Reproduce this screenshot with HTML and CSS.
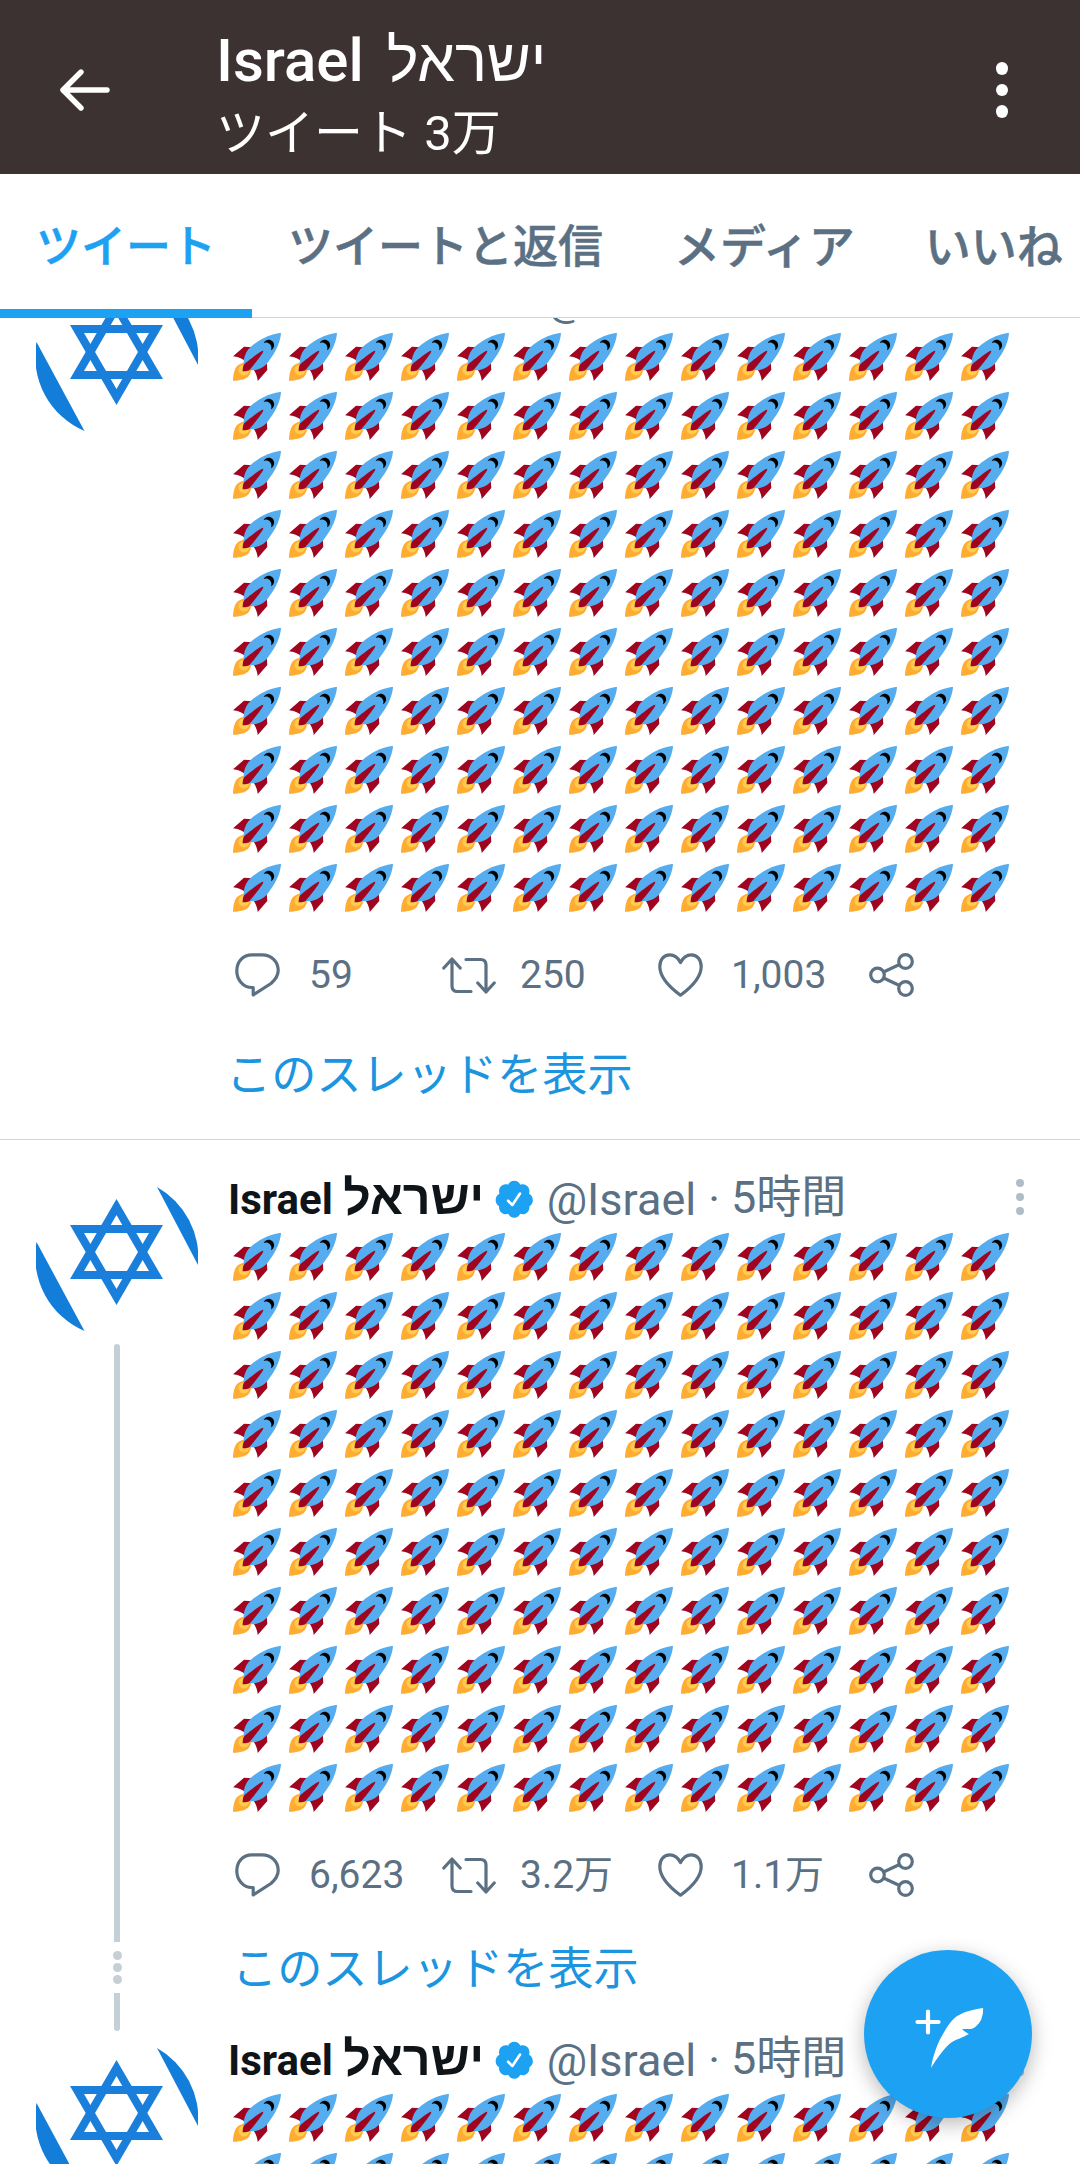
FILE: index.html
```html
<!DOCTYPE html>
<html lang="ja">
<head>
<meta charset="utf-8">
<title>Israel ישראל</title>
<link rel="stylesheet" href="styles.css">
</head>
<body>
<svg class="defs" width="0" height="0" aria-hidden="true">
  <defs>
    <pattern id="rocket-tile" patternUnits="userSpaceOnUse" width="56" height="59">
      <g transform="translate(-1.33 0) scale(1.37)">
        <path fill="#A0041E" d="M1 17l8-7 16 1 1 16-7 8s.001-5.999-6-12-12-6-12-6z"/>
        <path fill="#FFAC33" d="M.973 35s-.036-7.979 2.985-11S15 21.187 15 21.187 14.999 29 11.999 32c-3 3-11.026 3-11.026 3z"/>
        <circle fill="#FFCC4D" cx="8.999" cy="27" r="4"/>
        <path fill="#55ACEE" d="M35.999 0s-10 0-22 10c-6 5-6 14-4 16s11 2 16-4c10-12 10-22 10-22z"/>
        <path d="M26.999 5c-1.623 0-3.013.97-3.641 2.36.502-.227 1.055-.36 1.641-.36 2.209 0 4 1.791 4 4 0 .586-.133 1.139-.359 1.64 1.389-.627 2.359-2.017 2.359-3.64 0-2.209-1.791-4-4-4z"/>
        <path fill="#A0041E" d="M8 28s0-4 1-5 13.001-10.999 14-10-9.001 13-10.001 14S8 28 8 28z"/>
      </g>
    </pattern>
    <symbol id="i-avatar" viewBox="0 0 162 162">
      <path fill="#137ed9" d="M121 11A81 81 0 0 1 162 89Z"/>
      <path fill="#137ed9" d="M.5 66A81 81 0 0 0 48.5 155Z"/>
      <path fill="#1a7fdb" fill-rule="evenodd" d="M80.5 23L127 103H34ZM80.5 39L48 95H113Z"/>
      <path fill="#1a7fdb" fill-rule="evenodd" d="M34 49H127L80.5 129ZM48 57L80.5 113L113 57Z"/>
    </symbol>
    <symbol id="i-badge" viewBox="0 0 24 24">
      <path fill="#1da1f2" d="M22.5 12.5c0-1.58-.875-2.95-2.148-3.6.154-.435.238-.905.238-1.4 0-2.21-1.71-3.998-3.818-3.998-.47 0-.92.084-1.336.25C14.818 2.415 13.51 1.5 12 1.5s-2.816.917-3.437 2.25c-.415-.165-.866-.25-1.336-.25-2.11 0-3.818 1.79-3.818 4 0 .494.083.964.237 1.4-1.272.65-2.147 2.018-2.147 3.6 0 1.495.782 2.798 1.942 3.486-.02.17-.032.34-.032.514 0 2.21 1.708 4 3.818 4 .47 0 .92-.086 1.335-.25.62 1.334 1.926 2.25 3.437 2.25 1.512 0 2.818-.916 3.437-2.25.415.163.865.248 1.336.248 2.11 0 3.818-1.79 3.818-4 0-.174-.012-.344-.033-.513 1.158-.687 1.943-1.99 1.943-3.484zm-6.616-3.334l-4.334 6.5c-.145.217-.382.334-.625.334-.143 0-.288-.04-.416-.126l-.115-.094-2.415-2.415c-.293-.293-.293-.768 0-1.06s.768-.294 1.06 0l1.77 1.767 3.825-5.74c.23-.345.696-.436 1.04-.207.346.23.44.696.21 1.04z"/>
    </symbol>
    <symbol id="i-comment" viewBox="0 0 45 44">
      <path fill="none" stroke="#5b7083" stroke-width="3.2" stroke-linejoin="round" d="M17 1.8H27C36.5 1.8 43.2 8.5 43.2 17.5C43.2 23.5 40 27 36 30.5L18.2 42V34.5H17C8 34.5 1.8 26.5 1.8 18C1.8 8.5 8 1.8 17 1.8Z"/>
    </symbol>
    <symbol id="i-retweet" viewBox="0 0 54 37">
      <g fill="none" stroke="#5b7083" stroke-width="3.2" stroke-linecap="round" stroke-linejoin="round">
        <path d="M1.8 11L10 2L18.2 11M10 2V29C10 32.5 12 34.5 15.5 34.5H29"/>
        <path d="M35.8 26L44 35L52.2 26M44 35V8C44 4.5 42 2.5 38.5 2.5H24"/>
      </g>
    </symbol>
    <symbol id="i-heart" viewBox="0 0 45 44">
      <path fill="none" stroke="#5b7083" stroke-width="3.2" stroke-linejoin="round" d="M22.5 9.5C20 4.5 16 1.8 11.8 1.8C5.5 1.8 1.8 7 1.8 13.5C1.8 25 14 36 22.5 42.2C31 36 43.2 25 43.2 13.5C43.2 7 39.5 1.8 33.2 1.8C29 1.8 25 4.5 22.5 9.5Z"/>
    </symbol>
    <symbol id="i-share" viewBox="0 0 45 44">
      <g fill="none" stroke="#5b7083" stroke-width="3.2">
        <circle cx="36.5" cy="8.5" r="6.8"/>
        <circle cx="36.5" cy="35.5" r="6.8"/>
        <circle cx="8.5" cy="22" r="6.8"/>
        <path d="M14.5 19L30.5 11.5M14.5 25L30.5 32.5"/>
      </g>
    </symbol>
    <symbol id="i-more" viewBox="0 0 8 36">
      <g fill="#afbdc8"><circle cx="4" cy="4" r="4"/><circle cx="4" cy="18" r="4"/><circle cx="4" cy="32" r="4"/></g>
    </symbol>
  </defs>
</svg>

<div class="app">
  <header class="appbar">
    <svg class="appbar-back" viewBox="0 0 50 42" aria-hidden="true"><path fill="none" stroke="#fff" stroke-width="5.4" stroke-linecap="round" stroke-linejoin="round" d="M21 3L3 21L21 39M3 21H47"/></svg>
    <div class="appbar-titles">
      <div class="appbar-name">Israel <span class="he-title" lang="he">ישראל</span></div>
      <div class="appbar-sub">ツイート 3万</div>
    </div>
    <div class="appbar-more"><span></span><span></span><span></span></div>
  </header>

  <nav class="tabs">
    <div class="tab tab-active">ツイート</div>
    <div class="tab">ツイートと返信</div>
    <div class="tab tab-wide">メディア</div>
    <div class="tab tab-wide">いいね</div>
  </nav>

  <main class="timeline">
    <article class="tweet tweet-scrolled">
      <div class="side">
        <svg class="avatar"><use href="#i-avatar"/></svg>
      </div>
      <div class="body">
        <div class="head">
          <span class="name">Israel <span class="he" lang="he">ישראל</span></span>
          <svg class="badge"><use href="#i-badge"/></svg>
          <span class="handle">@Israel</span><span class="dot">·</span><span class="time">5時間</span>
          <svg class="more"><use href="#i-more"/></svg>
        </div>
        <svg class="rockets" role="img" aria-label="🚀"><rect width="784" height="590" fill="url(#rocket-tile)"/></svg>
        <div class="actions">
          <div class="action"><svg class="ic ic-comment"><use href="#i-comment"/></svg><span>59</span></div>
          <div class="action"><svg class="ic ic-retweet"><use href="#i-retweet"/></svg><span>250</span></div>
          <div class="action"><svg class="ic ic-heart"><use href="#i-heart"/></svg><span>1,003</span></div>
          <div class="action"><svg class="ic ic-share"><use href="#i-share"/></svg></div>
        </div>
        <div class="thread-link">このスレッドを表示</div>
      </div>
    </article>

    <article class="tweet tweet-thread">
      <div class="side">
        <svg class="avatar"><use href="#i-avatar"/></svg>
        <div class="line line-long"></div>
        <div class="gap-dots"><span></span><span></span><span></span></div>
        <div class="line line-short"></div>
      </div>
      <div class="body">
        <div class="head">
          <span class="name">Israel <span class="he" lang="he">ישראל</span></span>
          <svg class="badge"><use href="#i-badge"/></svg>
          <span class="handle">@Israel</span><span class="dot">·</span><span class="time">5時間</span>
          <svg class="more"><use href="#i-more"/></svg>
        </div>
        <svg class="rockets" role="img" aria-label="🚀"><rect width="784" height="590" fill="url(#rocket-tile)"/></svg>
        <div class="actions">
          <div class="action"><svg class="ic ic-comment"><use href="#i-comment"/></svg><span>6,623</span></div>
          <div class="action"><svg class="ic ic-retweet"><use href="#i-retweet"/></svg><span>3.2万</span></div>
          <div class="action"><svg class="ic ic-heart"><use href="#i-heart"/></svg><span>1.1万</span></div>
          <div class="action"><svg class="ic ic-share"><use href="#i-share"/></svg></div>
        </div>
        <div class="thread-link">このスレッドを表示</div>
      </div>
    </article>

    <article class="tweet tweet-last">
      <div class="side">
        <svg class="avatar"><use href="#i-avatar"/></svg>
      </div>
      <div class="body">
        <div class="head">
          <span class="name">Israel <span class="he" lang="he">ישראל</span></span>
          <svg class="badge"><use href="#i-badge"/></svg>
          <span class="handle">@Israel</span><span class="dot">·</span><span class="time">5時間</span>
          <svg class="more"><use href="#i-more"/></svg>
        </div>
        <svg class="rockets" role="img" aria-label="🚀"><rect width="784" height="590" fill="url(#rocket-tile)"/></svg>
      </div>
    </article>
  </main>

  <button class="fab" aria-label="ツイート">
    <svg class="fab-icon" viewBox="0 0 68 60" aria-hidden="true">
      <path fill="none" stroke="#fff" stroke-width="4.2" stroke-linecap="round" d="M2.500 14H23.500M13 3.500V24.500"/>
      <path fill="#fff" d="M16 60C18 47 23 34 28 26C33 17 38 10 44 7C51 3 60 1 68 0C68.500 5 67 9 66 12C63 17 60 20 56 21L47 21C49 23 52 25 54 26C47 30 42 31 37 34C31 38 22 50 16 60Z"/>
    </svg>
  </button>
</div>
</body>
</html>
```
FILE: styles.css
```css
* { box-sizing: border-box; }
html, body { margin: 0; padding: 0; background: #fff; }
body {
  font-family: Roboto, "Liberation Sans", "Noto Sans CJK JP", sans-serif;
  width: 1080px;
  height: 2164px;
  overflow: hidden;
}
.defs { position: absolute; }
.app {
  position: relative;
  width: 1080px;
  height: 2164px;
  display: flex;
  flex-direction: column;
  overflow: hidden;
}
.he { font-family: "Liberation Sans", sans-serif; font-size: 1.15em; line-height: 0; }
.he-title { font-family: "Liberation Sans", sans-serif; margin-left: 8px; }

/* App bar */
.appbar {
  flex: none;
  height: 174px;
  background: #3c3231;
  color: #fff;
  display: flex;
  align-items: flex-start;
  padding: 0 72px 0 60px;
}
.appbar-back { width: 50px; height: 42px; margin-top: 69px; flex: none; }
.appbar-titles { margin-left: 106px; padding-top: 26px; flex: 1; }
.appbar-name { font-size: 60px; line-height: 70px; font-weight: 500; }
.appbar-sub { font-size: 49px; line-height: 60px; margin-top: 8px; }
.appbar-more {
  flex: none;
  display: flex;
  flex-direction: column;
  gap: 9px;
  margin-top: 62px;
}
.appbar-more span { width: 12px; height: 12.500px; border-radius: 50%; background: #fff; }

/* Tabs */
.tabs {
  flex: none;
  height: 144px;
  display: flex;
  background: #fff;
  border-bottom: 1px solid #ccd6dd;
  font-family: Roboto, "Noto Sans CJK JP", sans-serif;
  font-size: 45px;
  font-weight: 500;
  -webkit-text-stroke: .5px currentColor;
  color: #5b7083;
  white-space: nowrap;
}
.tab {
  flex: none;
  height: 144px;
  padding: 0 36px 6px;
  display: flex;
  align-items: center;
}
.tab-wide { font-size: 46px; padding-left: 35px; padding-right: 35px; }
.tab-active {
  color: #1da1f2;
  border-bottom: 9px solid #1da1f2;
  padding-top: 3px;
  padding-bottom: 0;
}

/* Timeline */
.timeline { flex: 1; min-height: 0; overflow: hidden; }
.tweet {
  display: grid;
  grid-template-columns: 162px 822px;
  column-gap: 30px;
  padding: 36px 0 0 36px;
}
.tweet-scrolled {
  margin-top: -78px;
  padding-bottom: 37px;
  border-bottom: 1px solid #ccd6dd;
}
.tweet-thread { padding-bottom: 38px; }
.tweet-last { padding-top: 0; }

.side { display: flex; flex-direction: column; align-items: center; }
.avatar { width: 162px; height: 162px; flex: none; display: block; }
.tweet-thread .side { margin-bottom: -32px; }
.line { width: 6px; background: #c4cfd6; }
.line-long { flex: 1; margin-top: 6px; border-radius: 3px 3px 0 0; }
.line-short { flex: none; height: 38px; border-radius: 0 0 3px 3px; }
.gap-dots { flex: none; display: flex; flex-direction: column; gap: 3px; margin: 9px 0; }
.gap-dots span { width: 9px; height: 9px; border-radius: 50%; background: #c4cfd6; }

.body { min-width: 0; }
.head {
  height: 48px;
  display: flex;
  align-items: center;
  font-size: 42px;
  line-height: 48px;
  white-space: nowrap;
}
.name { font-weight: 700; color: #0f1419; }
.badge { width: 42.500px; height: 42.500px; margin-left: 9px; flex: none; margin-top: -2px; }
.handle { color: #5b7083; margin-left: 11px; font-size: 45px; }
.dot { color: #5b7083; margin-left: 12px; font-size: 45px; }
.time { color: #5b7083; margin-left: 11px; font-size: 45px; padding-bottom: 4px; }
.more { width: 8px; height: 36px; margin-left: auto; margin-right: 26px; margin-top: -6px; flex: none; }

.rockets { display: block; width: 784px; height: 590px; margin: 9px 0 0 5px; }

.actions {
  display: grid;
  grid-template-columns: 207px 216px 211px 44px;
  margin: 30px 0 0 7px;
  height: 44px;
  font-size: 39px;
  line-height: 44px;
  color: #5b7083;
}
.action { display: flex; align-items: center; white-space: nowrap; }
.ic { flex: none; height: 44px; display: block; }
.ic-comment { width: 45px; margin-right: 29px; }
.ic-retweet { width: 54px; height: 37px; margin-right: 24px; }
.ic-heart { width: 45px; margin-right: 28px; }
.ic-share { width: 45px; }

.thread-link {
  font-family: "Noto Sans CJK JP", sans-serif;
  font-size: 45.200px;
  line-height: 60px;
  color: #1b95e0;
  margin-top: 45px;
  margin-left: -2px;
  white-space: nowrap;
}
.tweet-thread .thread-link { margin: 39px 0 0 4px; padding-bottom: 3px; }

/* Compose button */
.fab {
  position: absolute;
  left: 864px;
  top: 1950px;
  width: 168px;
  height: 168px;
  padding: 0;
  border: 0;
  border-radius: 50%;
  background: #1da1f2;
  box-shadow: 0 6px 20px rgba(0, 0, 0, .28);
}
.fab-icon {
  position: absolute;
  left: 51px;
  top: 58px;
  width: 68px;
  height: 60px;
  overflow: visible;
}
```
